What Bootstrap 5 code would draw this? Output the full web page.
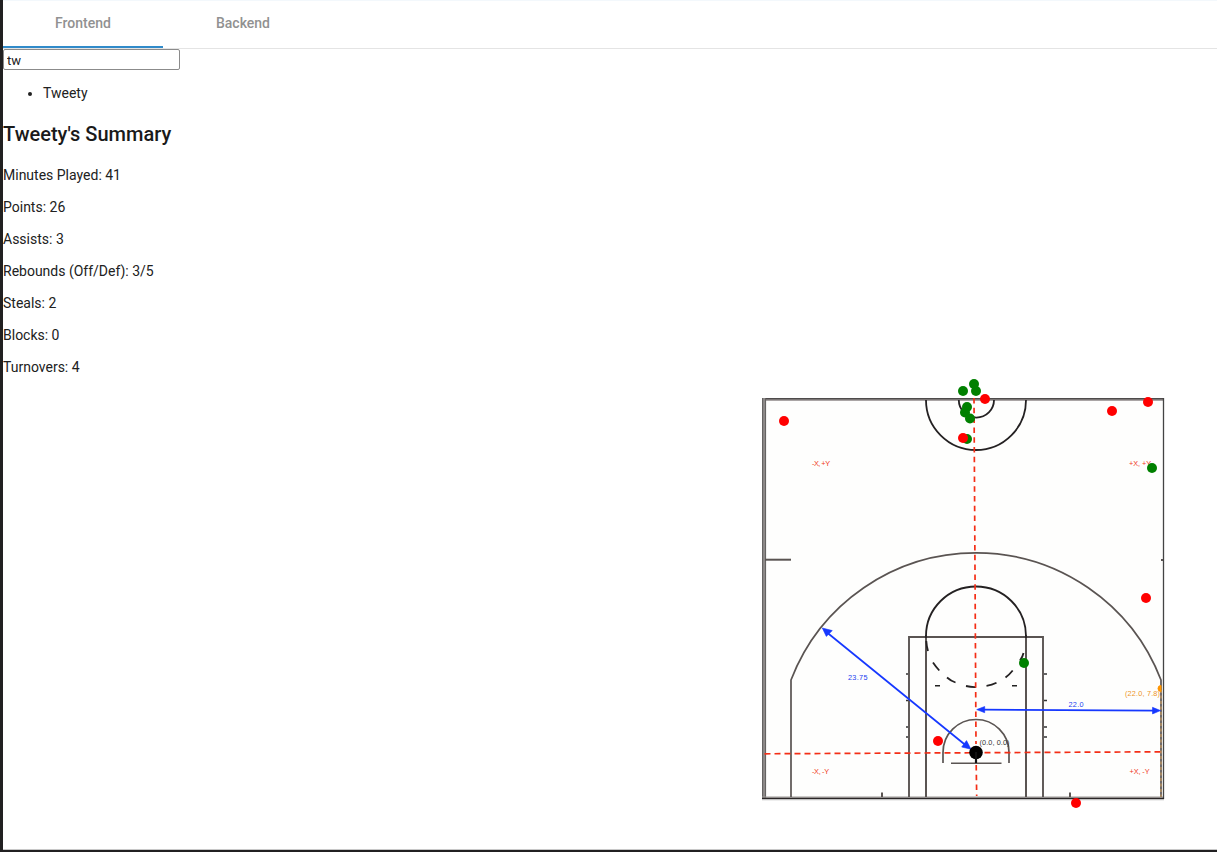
<!DOCTYPE html>
<html lang="en">
<head>
<meta charset="utf-8">
<meta name="viewport" content="width=device-width, initial-scale=1">
<title>Player Summary</title>
<link rel="stylesheet" href="https://cdn.jsdelivr.net/npm/bootstrap@5.3.0/dist/css/bootstrap.min.css">
<style>
  body { font-family: Roboto, sans-serif; font-size: 14px; line-height: 20px; color: #212121; background: #fff; }
  .app-frame { border-left: 3px solid #212021; border-bottom: 2px solid #212021; box-shadow: inset 0 -1px #c8c8c8; }
  .tab-strip { height: 49px; border-top: 1px solid #f3f8fc; border-bottom: 1px solid #e4e4e4; --bs-nav-link-color: #919191; --bs-nav-link-hover-color: #666; }
  .tab-strip .nav-link { width: 160px; height: 47px; padding: 0 0 2px; font-weight: 500; line-height: 44px; border-bottom: 2px solid transparent; border-radius: 0; }
  .tab-strip .nav-link.active { border-bottom-color: #318bca; }
  .search-box { width: 177px; height: 21px; padding: 1px 3px 0; font-size: 13px; border: 1px solid #8b8b8b; border-radius: 2px; color: #212121; }
  .match-list { margin: 13px 0 15px; padding-left: 40px; }
  .summary-title { font-size: 20px; line-height: 32px; font-weight: 500; margin-bottom: 15px; color: #1a1a1a; }
  .stats p { margin-bottom: 12px; }
  .court { margin: 0 27px 30px 0; }
  .court text { font-family: "Liberation Sans", Arial, sans-serif; font-size: 7.3px; }
</style>
</head>
<body>
<div class="app-frame vh-100 d-flex flex-column overflow-hidden">
  <nav class="tab-strip nav flex-shrink-0">
    <a class="nav-link active text-center" href="#">Frontend</a>
    <a class="nav-link text-center" href="#">Backend</a>
  </nav>
  <main class="d-flex flex-grow-1 justify-content-between">
    <section class="stats">
      <input class="search-box d-block" type="text" value="tw" aria-label="Player name">
      <ul class="match-list"><li>Tweety</li></ul>
      <h2 class="summary-title">Tweety's Summary</h2>
      <p>Minutes Played: 41</p>
      <p>Points: 26</p>
      <p>Assists: 3</p>
      <p>Rebounds (Off/Def): 3/5</p>
      <p>Steals: 2</p>
      <p>Blocks: 0</p>
      <p>Turnovers: 4</p>
    </section>
    <svg class="court align-self-end flex-shrink-0" width="440" height="450" viewBox="750 370 440 450" role="img" aria-label="Shot chart">
      <rect x="763" y="399" width="401" height="400" fill="#fefefd"/>
      <!-- court boundary -->
      <g fill="none">
        <path d="M762 400H1164" stroke="#aaa5a5" stroke-width="2"/>
        <path d="M762 398.8H1164" stroke="#4e4b4b" stroke-width="1.4"/>
        <path d="M764 398V799" stroke="#8e8a89" stroke-width="4"/>
        <path d="M762.6 398V799M765.6 398V799" stroke="#625f5e" stroke-width="1"/>
        <path d="M1163.5 398V799" stroke="#444" stroke-width="1.3"/>
        <path d="M762 797.2H1163" stroke="#9b9795" stroke-width="1.2"/>
        <path d="M762 798.5H1164" stroke="#292626" stroke-width="1.7"/>
        <path d="M762 799.8H1164" stroke="#bbb" stroke-width=".8"/>
      </g>
      <!-- court markings -->
      <g fill="none" stroke="#5a5452" stroke-width="1.7">
        <path d="M765 559.7H791" stroke-width="2"/>
        <path d="M1161 560H1163" stroke-width="2"/>
        <path d="M791 797V680A198.2 198.2 0 0 1 1161 680V797"/>
        <path d="M909 797V637H1043V797" stroke-width="1.9"/>
        <path d="M926 797V635M1026 797V635" stroke-width="2"/>
        <path d="M906 674H908M906 700.5H908M906 727H908M906 737H908M1044 674H1047M1044 700.5H1047M1044 727H1047M1044 737H1047" stroke="#333" stroke-width="1.4"/>
        <path d="M935 685.8H940M1012 685.8H1017" stroke="#222" stroke-width="1.4"/>
        <path d="M882 792.5V797M1070 792.5V797" stroke-width="2"/>
        <path d="M943 763V752.5A33 33 0 0 1 1009 752.5V763"/>
        <path d="M951 763.2H1001.5" stroke-width="1.6"/>
      </g>
      <g fill="none" stroke="#242122" stroke-width="1.8">
        <path d="M926 400A50 50 0 0 0 1026 400"/>
        <path d="M958.8 400A17.6 17.6 0 0 0 994 400"/>
        <path d="M926 638V636A50 49.5 0 0 1 1026 636V638"/>
        <path d="M926.3 641Q926.7 647 928 651M933 662.5Q936 667 939.3 670.5M947 677.5Q951 681 955.5 682.5M966 686Q971 687.2 976 687M986.5 685.8Q992 685 996.5 682.7M1005.5 677.5Q1009.5 674.5 1012.7 670.5M1020 660.5Q1023 656 1023.5 653"/>
      </g>
      <!-- axes -->
      <g stroke="#f42e16" stroke-width="1.7" fill="none">
        <path d="M974 398L976 744" stroke-dasharray="5.5 4.3"/>
        <path d="M764.5 753.8L1162 751.8" stroke-dasharray="6 4"/>
        <path d="M976.2 765L976.7 796" stroke-dasharray="5.5 4.3"/>
      </g>
      <!-- three-point line end -->
      <path d="M1161 690V797" stroke="#d9a45f" stroke-width="1" stroke-dasharray="3 2.5"/>
      <path d="M1161 685.5A3 3 0 0 0 1161 691.5Z" fill="#ff9500" stroke="#ff9500"/>
      <!-- distances -->
      <g stroke="#1638ff" fill="#1638ff" stroke-width="1.7">
        <path d="M827 632.5L966 745.5M982 709.6L1156 710.6" fill="none"/>
        <path d="M822.3 628L832.3 630.6L826.3 636.4ZM971 749.2L961.7 747L966.5 740.6ZM976.7 709.6L984.7 706.5V712.7ZM1160.5 710.6L1152.5 707.3V713.9Z" stroke-width=".6"/>
      </g>
      <circle cx="976" cy="752.5" r="6.8" fill="#000"/>
      <path d="M976 752V763" stroke="#111" stroke-width="2.2"/>
      <g fill="#f03a22">
        <text x="812" y="466" textLength="18">-X, +Y</text>
        <text x="1129" y="466" textLength="22">+X, +Y</text>
        <text x="812" y="774" textLength="17">-X, -Y</text>
        <text x="1129.5" y="774" textLength="20">+X, -Y</text>
      </g>
      <g fill="#2340f0">
        <text x="848" y="679.5" textLength="19.5">23.75</text>
        <text x="1068.5" y="706.5" textLength="15">22.0</text>
      </g>
      <text x="979.5" y="744.5" textLength="30" fill="#333">(0.0, 0.0)</text>
      <text x="1125" y="695.5" textLength="35" fill="#ed941f">(22.0, 7.8)</text>
      <!-- made shots -->
      <g fill="#008000">
        <circle cx="974" cy="384" r="5"/><circle cx="963" cy="391" r="5"/><circle cx="976" cy="391" r="5"/>
        <circle cx="967" cy="407" r="5"/><circle cx="965" cy="412.5" r="5"/><circle cx="970" cy="418.5" r="5"/>
        <circle cx="967" cy="439" r="5"/><circle cx="1152" cy="468" r="5"/><circle cx="1024" cy="663" r="5"/>
      </g>
      <!-- missed shots -->
      <g fill="#ff0000">
        <circle cx="985" cy="399" r="5"/><circle cx="963" cy="438" r="5"/><circle cx="784" cy="421" r="5"/>
        <circle cx="1112" cy="411" r="5"/><circle cx="1148" cy="402" r="5"/><circle cx="1146" cy="598" r="5"/>
        <circle cx="938" cy="741" r="5"/><circle cx="1076" cy="803" r="5"/>
      </g>
    </svg>
  </main>
</div>
<script src="https://cdn.jsdelivr.net/npm/bootstrap@5.3.0/dist/js/bootstrap.bundle.min.js"></script>
</body>
</html>
